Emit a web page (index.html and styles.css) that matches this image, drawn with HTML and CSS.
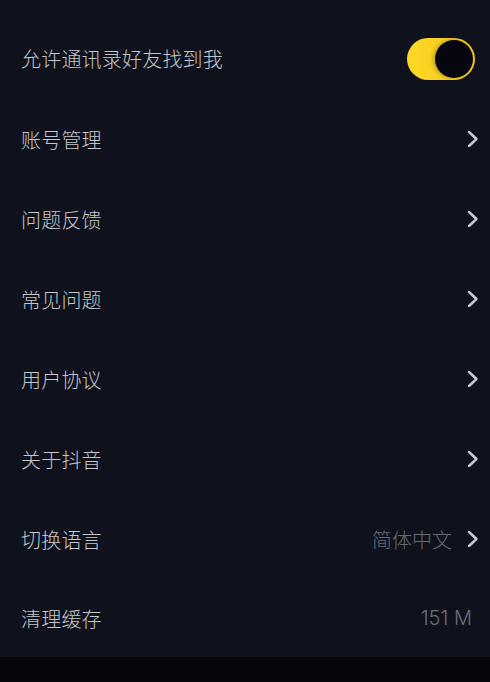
FILE: index.html
```html
<!DOCTYPE html>
<html lang="zh-CN">
<head>
  <meta charset="UTF-8" />
  <meta name="viewport" content="width=device-width, initial-scale=1.0"/>
  <title>设置</title>
  <link rel="stylesheet" href="styles.css">
</head>
<body>

  <ul class="settings">
    <li class="row">
      <span class="label">允许通讯录好友找到我</span>
      <span class="toggle on"><span class="knob"></span></span>
    </li>
    <li class="row">
      <span class="label">账号管理</span>
      <svg class="chev" viewBox="0 0 12 18"><path d="M2 2 L9.5 9 L2 16"/></svg>
    </li>
    <li class="row">
      <span class="label">问题反馈</span>
      <svg class="chev" viewBox="0 0 12 18"><path d="M2 2 L9.5 9 L2 16"/></svg>
    </li>
    <li class="row">
      <span class="label">常见问题</span>
      <svg class="chev" viewBox="0 0 12 18"><path d="M2 2 L9.5 9 L2 16"/></svg>
    </li>
    <li class="row">
      <span class="label">用户协议</span>
      <svg class="chev" viewBox="0 0 12 18"><path d="M2 2 L9.5 9 L2 16"/></svg>
    </li>
    <li class="row">
      <span class="label">关于抖音</span>
      <svg class="chev" viewBox="0 0 12 18"><path d="M2 2 L9.5 9 L2 16"/></svg>
    </li>
    <li class="row">
      <span class="label">切换语言</span>
      <span class="value">简体中文</span>
      <svg class="chev" viewBox="0 0 12 18"><path d="M2 2 L9.5 9 L2 16"/></svg>
    </li>
    <li class="row">
      <span class="label">清理缓存</span>
      <span class="value num">151 M</span>
    </li>
  </ul>

  <div class="bottom"></div>

</body>
</html>
```

FILE: styles.css
```css
body {
  margin: 0;
  background: #0f121c;
  font-family: "Noto Sans CJK SC", "Noto Sans", sans-serif;
  height: 682px;
  display: flex;
  flex-direction: column;
  overflow: hidden;
}

.settings {
  list-style: none;
  margin: 0;
  padding: 18px 0 0;
  flex: 1;
}

.row {
  height: 80px;
  display: flex;
  align-items: center;
  padding: 0 10px 0 21px;
}

.row:first-child {
  height: 81px;
}

.row:last-child {
  height: 78px;
}

.label {
  flex: 1;
  font-size: 20px;
  font-weight: 300;
  color: #c4c5ca;
  letter-spacing: 0.2px;
}

.value {
  font-size: 20px;
  font-weight: 300;
  color: #676a73;
  margin-right: 15px;
}

.value.num {
  margin-right: 8px;
  font-family: "Inter", "Noto Sans", sans-serif;
  font-weight: 300;
  font-size: 20px;
  color: #6b6e77;
}

.chev {
  width: 12px;
  height: 18px;
  margin-right: 1px;
}

.chev path {
  fill: none;
  stroke: #c9cacf;
  stroke-width: 2.4;
  stroke-linecap: round;
  stroke-linejoin: round;
}

.toggle {
  width: 68px;
  height: 42px;
  border-radius: 21px;
  background: linear-gradient(90deg, #fdd727, #f6c91a);
  display: flex;
  align-items: center;
  justify-content: flex-end;
  padding: 0 2px;
  box-sizing: border-box;
  margin-right: 5px;
}

.knob {
  width: 38px;
  height: 38px;
  border-radius: 50%;
  background: #05060f;
  box-shadow: -2px 0 4px rgba(0,0,0,0.25);
}

.bottom {
  height: 25px;
  background: #05060c;
}
```
